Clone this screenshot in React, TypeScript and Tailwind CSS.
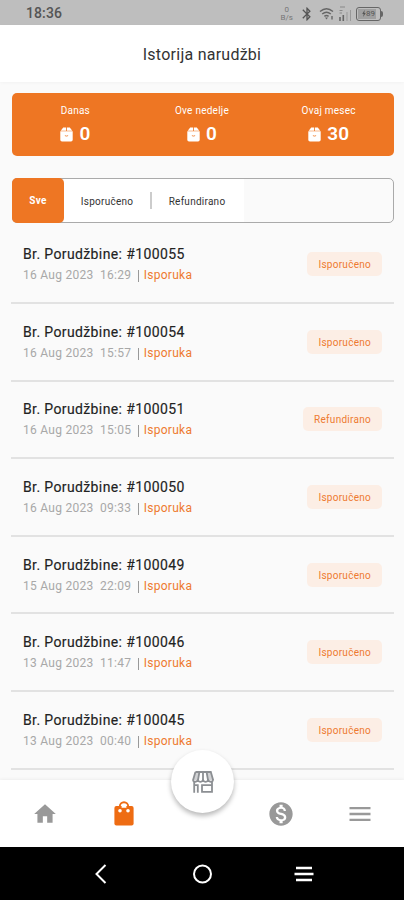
import React, { useState } from 'react';
import { MdBluetooth, MdHome, MdMenu, MdMonetizationOn } from 'react-icons/md';

type OrderStatus = 'Isporučeno' | 'Refundirano';

interface Order {
  id: number;
  date: string;
  time: string;
  status: OrderStatus;
}

const orders: Order[] = [
  { id: 100055, date: '16 Aug 2023', time: '16:29', status: 'Isporučeno' },
  { id: 100054, date: '16 Aug 2023', time: '15:57', status: 'Isporučeno' },
  { id: 100051, date: '16 Aug 2023', time: '15:05', status: 'Refundirano' },
  { id: 100050, date: '16 Aug 2023', time: '09:33', status: 'Isporučeno' },
  { id: 100049, date: '15 Aug 2023', time: '22:09', status: 'Isporučeno' },
  { id: 100046, date: '13 Aug 2023', time: '11:47', status: 'Isporučeno' },
  { id: 100045, date: '13 Aug 2023', time: '00:40', status: 'Isporučeno' },
];

const stats = [
  { label: 'Danas', value: 0 },
  { label: 'Ove nedelje', value: 0 },
  { label: 'Ovaj mesec', value: 30 },
];

const PackageIcon: React.FC = () => (
  <svg width="13" height="15" viewBox="0 0 13 15">
    <path d="M3.2 0.5h2.9v3.2H0.7zM6.9 0.5h2.9l2.5 3.2H6.9z" fill="#fff" />
    <path d="M0.3 4.2h12.4v8.6q0 1.7-1.7 1.7H2q-1.7 0-1.7-1.7z" fill="#fff" />
    <path d="M4.9 8.6q1.6 1 3.2 0" fill="none" stroke="#ee7623" strokeWidth="0.8" />
  </svg>
);

const BagIcon: React.FC = () => (
  <svg width="20" height="25" viewBox="0 0 20 25">
    <path d="M5.8 8V5.4a4.2 4.2 0 0 1 8.4 0V8" fill="none" stroke="#ee6c13" strokeWidth="1.9" />
    <rect x="0.4" y="5" width="19.2" height="19.4" rx="2" fill="#ee6c13" />
    <circle cx="6" cy="9.8" r="1.8" fill="#fff" />
    <circle cx="14" cy="9.8" r="1.8" fill="#fff" />
    <path d="M7.6 5.4a2.4 2.2 0 0 1 4.8 0v1.4H7.6z" fill="#fff" />
  </svg>
);

const StoreIcon: React.FC = () => (
  <svg width="24" height="22" viewBox="0 0 24 22" fill="none" stroke="#8c8f93" strokeWidth="1.8">
    <path d="M4.4 1h15.4l2.4 8.2M4.4 1L2 9.2M8.4 1L7 9.2M15.6 1L17 9.2M12 1v8.2" />
    <path d="M1.6 9.2q2.6 3.4 5.2 0 2.6 3.4 5.2 0 2.6 3.4 5.2 0 2.6 3.4 5.2 0" />
    <path d="M4.6 1h3.8L7 9.6H2.2zM15.6 1h4l2.4 8.6h-5z" fill="#8c8f93" stroke="none" opacity="0.4" />
    <path d="M3.2 11v10.8M6.8 21.8v-7.6H3.6M21 11v9.8H11v-6.6h10" />
  </svg>
);

const StatusBar: React.FC = () => (
  <div className="flex h-[25px] shrink-0 items-center justify-between bg-[#bebebe] pt-0.5 pr-[21px] pl-[26px] text-[#555]">
    <span className="text-[14px] font-medium tracking-[0.1px]">18:36</span>
    <div className="flex items-center">
      <div className="mr-1.5 flex flex-col items-center text-[8px] leading-[8px] text-[#777]">
        <span>0</span>
        <span>B/s</span>
      </div>
      <MdBluetooth size={16} className="mr-1" />
      <svg width="17" height="14" viewBox="0 0 17 14" fill="none" stroke="#666" strokeWidth="1.4">
        <path d="M1 4.5q6.5-5.5 13 0M3.2 7q4.3-3.6 8.6 0M5.4 9.4q2.1-1.7 4.2 0" />
        <path d="M6 10.6h3l-1.5 1.8z" fill="#666" stroke="none" />
        <path d="M13 9v3.5" />
      </svg>
      <svg width="14" height="16" viewBox="0 0 14 16" className="mr-1 ml-0.5">
        <path d="M2 1h5M1.5 4.5h3M1.5 7h2.5" stroke="#888" strokeWidth="1" />
        <path d="M2 15v-4M5.3 15V9" stroke="#666" strokeWidth="1.6" />
        <path d="M9 15V6M12.5 15V4" stroke="#999" strokeWidth="1" />
      </svg>
      <div className="flex h-[14px] w-[25px] items-center justify-center rounded-[3px] border-[1.5px] border-[#666] p-px">
        <div className="flex h-full w-full items-center bg-linear-to-r from-[#a0a0a0] from-85% to-[#bebebe] to-85% pl-1 text-[8px] leading-none text-[#555]">
          <svg width="4" height="7" viewBox="0 0 3 6">
            <path d="M2 0L0 3.4h1.2L0.8 6 3 2.6H1.8z" fill="#555" />
          </svg>
          <span>89</span>
        </div>
      </div>
      <div className="h-1.5 w-[2px] rounded-r bg-[#666]"></div>
    </div>
  </div>
);

const OrderRow: React.FC<{ order: Order }> = ({ order }) => (
  <div className="flex h-[77.6px] items-center justify-between border-b-2 border-[#e2e2e2] pt-0.5 pr-3 pl-3">
    <div>
      <p className="text-[14px] leading-[21px] tracking-[0.38px] text-[#222] [-webkit-text-stroke:0.15px_#222]">
        Br. Porudžbine: #{order.id}
      </p>
      <p className="flex text-[12px] leading-[21px] tracking-[0.27px] text-[#a8a8a8]">
        <span className="whitespace-pre">{order.date}  {order.time}</span>
        <span className="mt-[5px] mr-[5px] ml-[6.5px] h-3 w-px bg-[#999]"></span>
        <span className="text-[#ee7a30]">Isporuka</span>
      </p>
    </div>
    <span className="mb-0.5 flex h-6 items-center rounded-[5px] bg-[#fceee5] px-[11px] pt-px text-[10px] tracking-[0.27px] text-[#ee7a30]">
      {order.status}
    </span>
  </div>
);

const App: React.FC = () => {
  const [filter, setFilter] = useState<'Sve' | OrderStatus>('Sve');

  const visible = orders.filter((order) => filter === 'Sve' || order.status === filter);

  return (
    <div className="flex h-[900px] w-[404px] flex-col overflow-hidden bg-[#fafafa] font-[Roboto,sans-serif]">
      <StatusBar />

      <header className="flex h-[57px] shrink-0 items-center justify-center bg-white pt-0.5 shadow-[0_1px_3px_rgba(0,0,0,0.03)]">
        <h1 className="text-[16px] tracking-[0.25px] text-[#333]">Istorija narudžbi</h1>
      </header>

      <main className="flex min-h-0 flex-1 flex-col overflow-hidden pt-[11px] pr-2.5 pl-[11px]">
        <div className="ml-px flex h-[63px] shrink-0 rounded-[5px] bg-[#ee7623] pr-0.5 text-white">
          {stats.map((stat) => (
            <div key={stat.label} className="flex flex-1 flex-col items-center pt-2.5">
              <span className="text-[10px] leading-4 tracking-[0.25px]">{stat.label}</span>
              <div className="flex items-center gap-[6px] pt-px">
                <PackageIcon />
                <span className="text-[19px] leading-7 font-semibold">{stat.value}</span>
              </div>
            </div>
          ))}
        </div>

        <div className="ml-px mt-[22px] flex h-[45px] shrink-0 rounded-[5px] border border-[#aaa] text-[10px] tracking-[0.25px] text-[#333]">
          <button
            onClick={() => setFilter('Sve')}
            className="-my-px -ml-px w-[52px] rounded-[5px] bg-[#ee7623] font-bold text-white"
          >
            Sve
          </button>
          <button onClick={() => setFilter('Isporučeno')} className="w-[86px] bg-white pt-px">
            Isporučeno
          </button>
          <div className="flex items-center bg-white">
            <div className="h-[17px] w-[2px] bg-[#ccc]"></div>
          </div>
          <button onClick={() => setFilter('Refundirano')} className="w-[92px] bg-white pt-px pr-0.5">
            Refundirano
          </button>
        </div>

        <div className="mt-[3.5px]">
          {visible.map((order) => (
            <OrderRow key={order.id} order={order} />
          ))}
        </div>
      </main>

      <nav className="relative flex h-[67px] shrink-0 items-center bg-white text-[#999] shadow-[0_-1px_3px_rgba(0,0,0,0.05)]">
        <div className="flex w-[90px] justify-center">
          <MdHome size={26} />
        </div>
        <div className="flex w-[68px] justify-center">
          <BagIcon />
        </div>
        <div className="w-[88px]"></div>
        <div className="flex w-[70px] justify-center">
          <MdMonetizationOn size={28} />
        </div>
        <div className="flex w-[88px] justify-center">
          <MdMenu size={28} />
        </div>
        {/* Floating store button */}
        <button className="absolute -top-[30px] left-[171px] flex h-[63px] w-[63px] items-center justify-center rounded-full bg-white shadow-[0_3px_5px_rgba(0,0,0,0.28)]">
          <StoreIcon />
        </button>
      </nav>

      <div className="flex h-[53px] shrink-0 items-center justify-between bg-black px-[90px]">
        <svg width="22" height="22" viewBox="0 0 22 22" fill="none" stroke="#fff" strokeWidth="2">
          <path d="M15.5 2L6.5 11l9 9" />
        </svg>
        <svg width="22" height="22" viewBox="0 0 22 22" fill="none" stroke="#fff" strokeWidth="2">
          <circle cx="11.5" cy="11" r="8.5" />
        </svg>
        <svg width="22" height="22" viewBox="0 0 22 22" stroke="#fff" strokeWidth="2.4">
          <path d="M4 5h16M2.5 11h19M4 17h16" />
        </svg>
      </div>
    </div>
  );
};

export default App;
